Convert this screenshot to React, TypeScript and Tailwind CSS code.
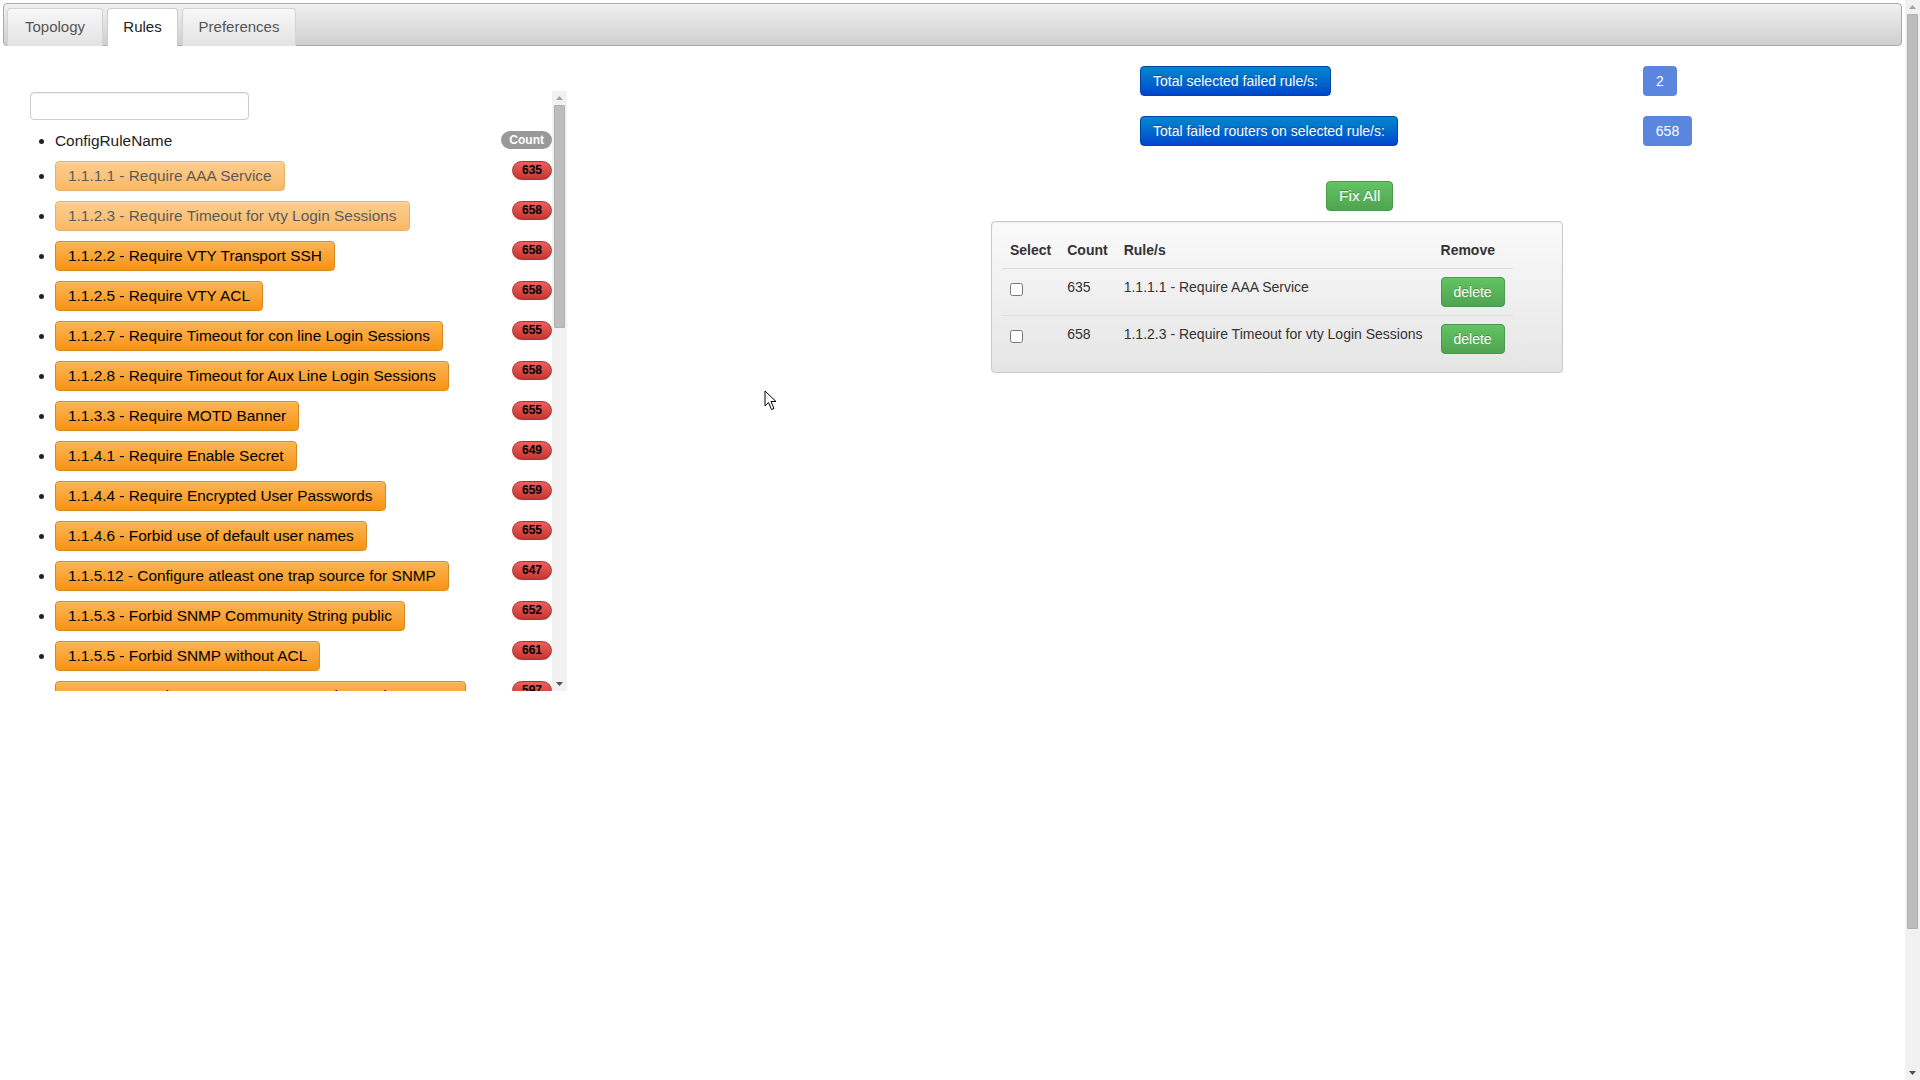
import { useState } from 'react'

interface Rule {
  name: string
  count: number
  picked?: boolean
}

const rules: Rule[] = [
  { name: '1.1.1.1 - Require AAA Service', count: 635, picked: true },
  { name: '1.1.2.3 - Require Timeout for vty Login Sessions', count: 658, picked: true },
  { name: '1.1.2.2 - Require VTY Transport SSH', count: 658 },
  { name: '1.1.2.5 - Require VTY ACL', count: 658 },
  { name: '1.1.2.7 - Require Timeout for con line Login Sessions', count: 655 },
  { name: '1.1.2.8 - Require Timeout for Aux Line Login Sessions', count: 658 },
  { name: '1.1.3.3 - Require MOTD Banner', count: 655 },
  { name: '1.1.4.1 - Require Enable Secret', count: 649 },
  { name: '1.1.4.4 - Require Encrypted User Passwords', count: 659 },
  { name: '1.1.4.6 - Forbid use of default user names', count: 655 },
  { name: '1.1.5.12 - Configure atleast one trap source for SNMP', count: 647 },
  { name: '1.1.5.3 - Forbid SNMP Community String public', count: 652 },
  { name: '1.1.5.5 - Forbid SNMP without ACL', count: 661 },
  { name: '1.1.5.6 - Require SNMP Trap Server When Using SNMP', count: 597 },
]

// classic scrollbar look, drawn because the page and the list render without native bars
function ScrollBar({ thumbTop, thumbHeight }: { thumbTop: number; thumbHeight: number }) {
  return (
    <div className="w-[15px] h-full flex flex-col bg-[#f1f1f1]">
      <div className="h-[14px] flex items-center justify-center">
        <svg width="7" height="4" viewBox="0 0 7 4"><path d="M0 4 L3.5 0 L7 4 Z" fill="#a3a3a3" /></svg>
      </div>
      <div className="flex-1">
        <div
          className="mx-[2px] rounded-[1px] bg-[#bdbdbd] border border-[#b0b0b0]"
          style={{ marginTop: thumbTop, height: thumbHeight }}
        />
      </div>
      <div className="h-[14px] flex items-center justify-center">
        <svg width="7" height="4" viewBox="0 0 7 4"><path d="M0 0 L7 0 L3.5 4 Z" fill="#505050" /></svg>
      </div>
    </div>
  )
}

function Cursor() {
  return (
    <svg className="absolute left-[764px] top-[390px]" width="14" height="21" viewBox="0 0 14 21">
      <path d="M1 1 L1 16 L4.5 12.5 L7.5 19.5 L10 18.5 L7 11.5 L12 11.5 Z" fill="#fff" stroke="#000" strokeWidth="1" strokeLinejoin="round" />
    </svg>
  )
}

export default function App() {
  const [checked, setChecked] = useState<Record<number, boolean>>({})

  return (
    <div className="relative h-[1080px] overflow-hidden flex bg-white text-[#333] font-['Liberation_Sans',Arial,sans-serif]">
      <div className="w-[1905px]">
        {/* tab bar */}
        <div className="mx-[3px] mt-[3px] h-[43px] flex items-end gap-[4px] pl-[3px] rounded-[4px] border border-[#aaa] bg-linear-to-b from-[#f0f0f0] to-[#cfcfcf]">
          <div className="h-[38px] w-[96px] flex items-center justify-center text-[15px] text-[#555] rounded-t-[4px] border border-b-0 border-[#d3d3d3] bg-linear-to-b from-[#f7f7f7] to-[#e3e3e3] -mb-px">
            Topology
          </div>
          <div className="h-[38px] w-[71px] flex items-center justify-center text-[15px] text-[#212121] rounded-t-[4px] border border-b-0 border-[#ccc] bg-white -mb-px">
            Rules
          </div>
          <div className="h-[38px] w-[114px] flex items-center justify-center text-[15px] text-[#555] rounded-t-[4px] border border-b-0 border-[#d3d3d3] bg-linear-to-b from-[#f7f7f7] to-[#e3e3e3] -mb-px">
            Preferences
          </div>
        </div>

        <div className="flex items-start">
          {/* rule list */}
          <div className="ml-[15px] mt-[45px] w-[552px] h-[600px] flex">
            <div className="w-[537px] h-full overflow-hidden">
              <input
                type="text"
                className="block ml-[15px] mt-px w-[219px] h-[28px] rounded-[4px] border border-[#ccc] bg-white shadow-[inset_0_1px_1px_rgba(0,0,0,0.075)] outline-none"
              />
              <ul className="list-disc pl-[40px] mt-[11px] text-[15.4px] text-[#222]">
                <li className="h-[20px] leading-[20px] mb-[5px]">
                  <div className="flex items-start justify-between">
                    <span>ConfigRuleName</span>
                    <span className="h-[18px] px-[8px] rounded-full bg-[#999] text-white text-[12px] font-bold leading-[18px]">Count</span>
                  </div>
                </li>
                {rules.map((r) => (
                  <li key={r.name} className="py-[5px] leading-[30px]">
                    <div className="flex items-start justify-between">
                      <button
                        className={`h-[30px] px-[12px] rounded-[4px] border border-[#d88a1c] bg-linear-to-b from-[#fbb450] to-[#f89406] text-black leading-[28px] whitespace-nowrap shadow-[inset_0_1px_0_rgba(255,255,255,0.2),0_1px_2px_rgba(0,0,0,0.05)] ${r.picked ? 'opacity-65' : ''}`}
                      >
                        {r.name}
                      </button>
                      <span className="h-[19px] px-[9px] rounded-full border border-[#a8322c] bg-linear-to-b from-[#ee5f5b] to-[#c1372f] text-black text-[12px] font-bold leading-[17px]">
                        {r.count}
                      </span>
                    </div>
                  </li>
                ))}
              </ul>
            </div>
            <ScrollBar thumbTop={0} thumbHeight={223} />
          </div>

          {/* summary side */}
          <div className="flex-1 text-[14px]">
            <div className="mt-[20px] pl-[573px] flex items-start">
              <div className="w-[503px]">
                <button className="h-[30px] px-[12px] rounded-[4px] border border-[#0044aa] bg-linear-to-b from-[#0088cc] to-[#0044cc] text-white leading-[28px] [text-shadow:0_-1px_0_rgba(0,0,0,0.25)]">
                  Total selected failed rule/s:
                </button>
              </div>
              <span className="h-[30px] w-[34px] rounded-[4px] bg-[#5b86de] text-white leading-[30px] text-center">2</span>
            </div>
            <div className="mt-[20px] pl-[573px] flex items-start">
              <div className="w-[503px]">
                <button className="h-[30px] px-[12px] rounded-[4px] border border-[#0044aa] bg-linear-to-b from-[#0088cc] to-[#0044cc] text-white leading-[28px] [text-shadow:0_-1px_0_rgba(0,0,0,0.25)]">
                  Total failed routers on selected rule/s:
                </button>
              </div>
              <span className="h-[30px] w-[49px] rounded-[4px] bg-[#5b86de] text-white leading-[30px] text-center">658</span>
            </div>

            <div className="mt-[35px] pl-[759px]">
              <button className="h-[30px] px-[12px] rounded-[4px] border border-[#4a9a4a] bg-linear-to-b from-[#62c462] to-[#51a351] text-white text-[15.5px] leading-[28px] [text-shadow:0_-1px_0_rgba(0,0,0,0.25)]">
                Fix All
              </button>
            </div>

            <div className="mt-[10px] ml-[424px] w-[572px] p-[10px] rounded-[4px] border border-[#c8c8c8] bg-linear-to-b from-[#fafafa] to-[#e5e5e5] shadow-[inset_0_1px_1px_rgba(0,0,0,0.05)]">
              <table className="border-collapse text-[14px] leading-[20px]">
                <thead>
                  <tr>
                    <th className="p-[8px] text-left font-bold">Select</th>
                    <th className="p-[8px] text-left font-bold">Count</th>
                    <th className="p-[8px] text-left font-bold">Rule/s</th>
                    <th className="p-[8px] text-left font-bold">Remove</th>
                  </tr>
                </thead>
                <tbody>
                  {rules.filter((r) => r.picked).map((r, i) => (
                    <tr key={r.name} className="border-t border-[#ddd]">
                      <td className="p-[8px] align-top">
                        <input
                          type="checkbox"
                          className="block mt-[6px] w-[13px] h-[13px]"
                          checked={!!checked[i]}
                          onChange={() => setChecked({ ...checked, [i]: !checked[i] })}
                        />
                      </td>
                      <td className="p-[8px] align-top">{r.count}</td>
                      <td className="p-[8px] pr-[10px] align-top">{r.name}</td>
                      <td className="p-[8px] align-top">
                        <button className="h-[30px] px-[12px] rounded-[4px] border border-[#4a9a4a] bg-linear-to-b from-[#62c462] to-[#51a351] text-white leading-[28px] [text-shadow:0_-1px_0_rgba(0,0,0,0.25)]">
                          delete
                        </button>
                      </td>
                    </tr>
                  ))}
                </tbody>
              </table>
            </div>
          </div>
        </div>
      </div>

      {/* page scrollbar */}
      <div className="h-[1080px]">
        <ScrollBar thumbTop={0} thumbHeight={915} />
      </div>

      <Cursor />
    </div>
  )
}
